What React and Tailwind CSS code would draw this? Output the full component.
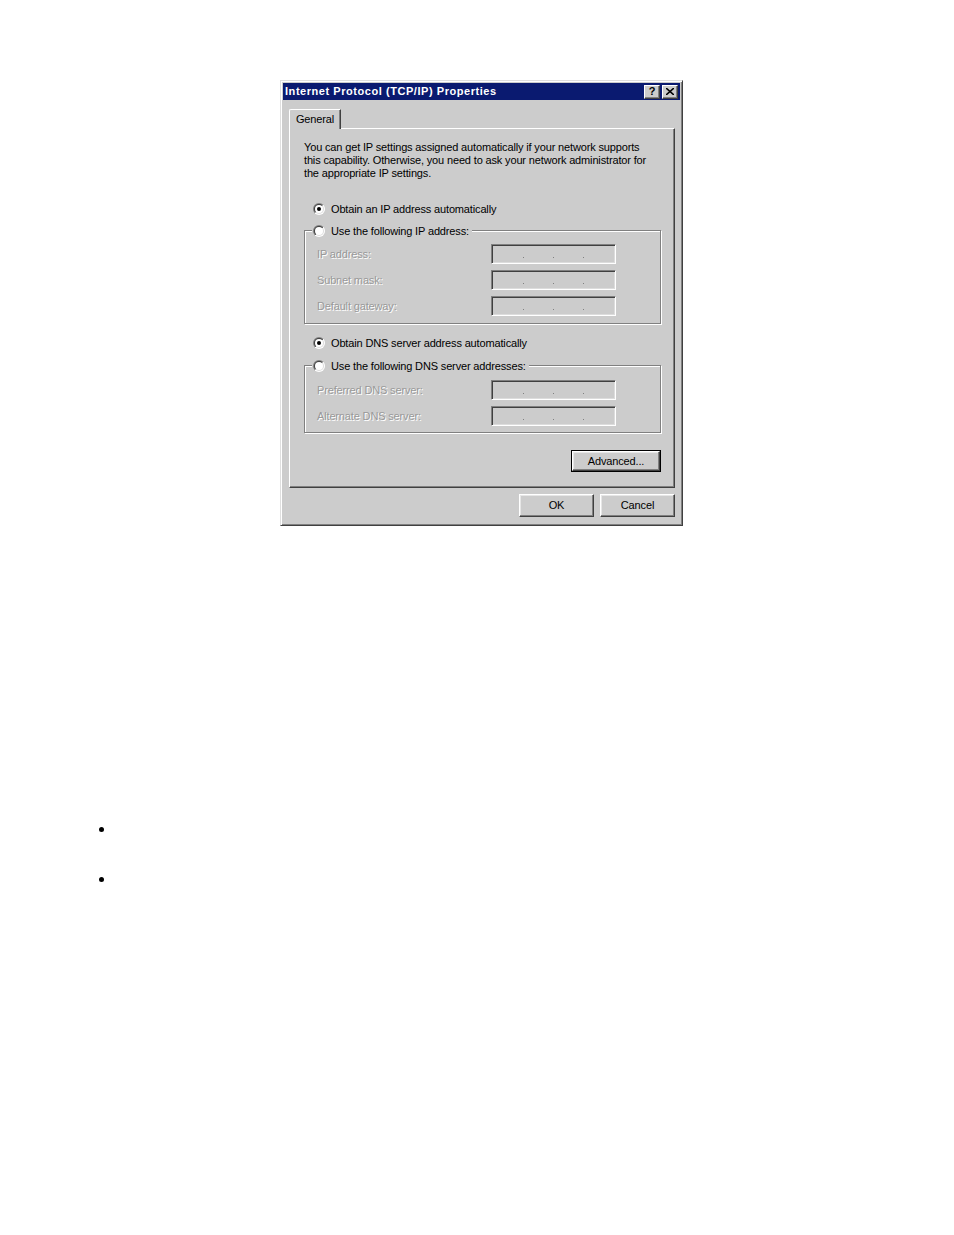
import React from 'react';

const font = { fontFamily: '"Liberation Sans", Arial, sans-serif' };

const Radio = ({ checked }) => (
  <svg width="12" height="12" viewBox="0 0 12 12" className="shrink-0">
    <defs>
      <linearGradient id="ro" x1="0" y1="0" x2="1" y2="1">
        <stop offset="0.5" stopColor="#808080" />
        <stop offset="0.5" stopColor="#ffffff" />
      </linearGradient>
      <linearGradient id="ri" x1="0" y1="0" x2="1" y2="1">
        <stop offset="0.5" stopColor="#404040" />
        <stop offset="0.5" stopColor="#dcdcdc" />
      </linearGradient>
    </defs>
    <circle cx="6" cy="6" r="6" fill="url(#ro)" />
    <circle cx="6" cy="6" r="5" fill="url(#ri)" />
    <circle cx="6" cy="6" r="4" fill="#ffffff" />
    {checked && <circle cx="6" cy="6" r="2" fill="#000000" />}
  </svg>
);

const IpField = () => (
  <div className="flex h-[20px] w-[125px] items-end gap-[29px] border border-t-[#808080] border-l-[#808080] border-r-[#ffffff] border-b-[#ffffff] bg-[#cccccc] pb-[5px] pl-[31px] shadow-[inset_1px_1px_0_#404040,inset_-1px_-1px_0_#dcdcdc]">
    <span className="h-px w-px bg-[#808080]" />
    <span className="h-px w-px bg-[#808080]" />
    <span className="h-px w-px bg-[#808080]" />
  </div>
);

const FieldRow = ({ label }) => (
  <div className="flex h-[20px] items-center">
    <span className="w-[174px] text-[#999999] [text-shadow:1px_1px_0_#ffffff]">{label}</span>
    <IpField />
  </div>
);

const RadioRow = ({ checked, label }) => (
  <div className="flex h-[14px] items-center gap-[6px]">
    <Radio checked={checked} />
    <span>{label}</span>
  </div>
);

const Button = ({ children, isDefault }) =>
  isDefault ? (
    <div className="border border-black">
      <div className="flex h-[20px] w-[88px] items-center justify-center border border-t-[#ffffff] border-l-[#ffffff] border-r-[#404040] border-b-[#404040] shadow-[inset_-1px_-1px_0_#808080,inset_1px_1px_0_#e6e6e6]">
        {children}
      </div>
    </div>
  ) : (
    <div className="flex h-[23px] w-[75px] items-center justify-center border border-t-[#ffffff] border-l-[#ffffff] border-r-[#404040] border-b-[#404040] shadow-[inset_-1px_-1px_0_#808080,inset_1px_1px_0_#e6e6e6]">
      {children}
    </div>
  );

const TitleButton = ({ children }) => (
  <div className="flex h-[14px] w-[16px] items-center justify-center border border-t-[#ffffff] border-l-[#ffffff] border-r-[#404040] border-b-[#404040] bg-[#cccccc] text-[11px] font-bold leading-none text-black shadow-[inset_-1px_-1px_0_#808080]">
    {children}
  </div>
);

export default function App() {
  return (
    <div className="min-h-[1235px] bg-white pt-[80px] text-[11px] tracking-[-0.15px] text-black" style={font}>
      <div className="ml-[280px] flex h-[446px] w-[403px] flex-col border border-t-[#dfdfdf] border-l-[#dfdfdf] border-r-[#404040] border-b-[#404040] bg-[#cccccc] p-[2px] shadow-[inset_1px_1px_0_#ffffff,inset_-1px_-1px_0_#808080]">
        <div className="flex h-[17px] items-center justify-between bg-[#0a1a70] pl-[2px] pr-[2px]">
          <span className="text-[11px] font-bold tracking-[0.55px] text-white">Internet Protocol (TCP/IP) Properties</span>
          <div className="flex gap-[2px] tracking-normal">
            <TitleButton>?</TitleButton>
            <TitleButton>
              <svg width="8" height="7" viewBox="0 0 8 7">
                <path d="M0 0 L8 7 M8 0 L0 7" stroke="#000" strokeWidth="1.6" />
              </svg>
            </TitleButton>
          </div>
        </div>

        <div className="ml-[6px] mt-[9px] flex">
          <div className="relative z-10 -mb-px flex h-[20px] w-[52px] items-center justify-center rounded-tl-[2px] border-l border-t border-r border-l-[#ffffff] border-t-[#ffffff] border-r-[#404040] bg-[#cccccc] shadow-[inset_-1px_0_0_#808080]">
            General
          </div>
        </div>

        <div className="ml-[6px] flex h-[360px] w-[386px] flex-col border border-t-[#ffffff] border-l-[#ffffff] border-r-[#404040] border-b-[#404040] pl-[14px] pr-[13px] pt-[12px] shadow-[inset_-1px_-1px_0_#808080]">
          <p className="leading-[13px]">
            You can get IP settings assigned automatically if your network supports
            <br />
            this capability. Otherwise, you need to ask your network administrator for
            <br />
            the appropriate IP settings.
          </p>

          <div className="ml-[9px] mt-[22px]">
            <RadioRow checked label="Obtain an IP address automatically" />
          </div>

          <div className="relative mt-[14px] flex h-[94px] flex-col gap-[6px] border border-[#808080] pl-[12px] pt-[13px] shadow-[1px_1px_0_#ffffff,inset_1px_1px_0_#ffffff]">
            <div className="absolute -top-[7px] left-[7px] bg-[#cccccc] pl-px pr-[3px]">
              <RadioRow label="Use the following IP address:" />
            </div>
            <FieldRow label="IP address:" />
            <FieldRow label="Subnet mask:" />
            <FieldRow label="Default gateway:" />
          </div>

          <div className="ml-[9px] mt-[12px]">
            <RadioRow checked label="Obtain DNS server address automatically" />
          </div>

          <div className="relative mt-[15px] flex h-[68px] flex-col gap-[6px] border border-[#808080] pl-[12px] pt-[14px] shadow-[1px_1px_0_#ffffff,inset_1px_1px_0_#ffffff]">
            <div className="absolute -top-[7px] left-[7px] bg-[#cccccc] pl-px pr-[3px]">
              <RadioRow label="Use the following DNS server addresses:" />
            </div>
            <FieldRow label="Preferred DNS server:" />
            <FieldRow label="Alternate DNS server:" />
          </div>

          <div className="mt-[17px] flex justify-end">
            <Button isDefault>Advanced...</Button>
          </div>
        </div>

        <div className="mt-[6px] flex justify-end gap-[6px] pr-[5px]">
          <Button>OK</Button>
          <Button>Cancel</Button>
        </div>
      </div>

      <ul className="mt-[291px] list-disc pl-[115px] text-[16px] tracking-normal" style={{ fontFamily: '"Liberation Serif", serif' }}>
        <li className="mb-[26px]">&nbsp;</li>
        <li>&nbsp;</li>
      </ul>
    </div>
  );
}
